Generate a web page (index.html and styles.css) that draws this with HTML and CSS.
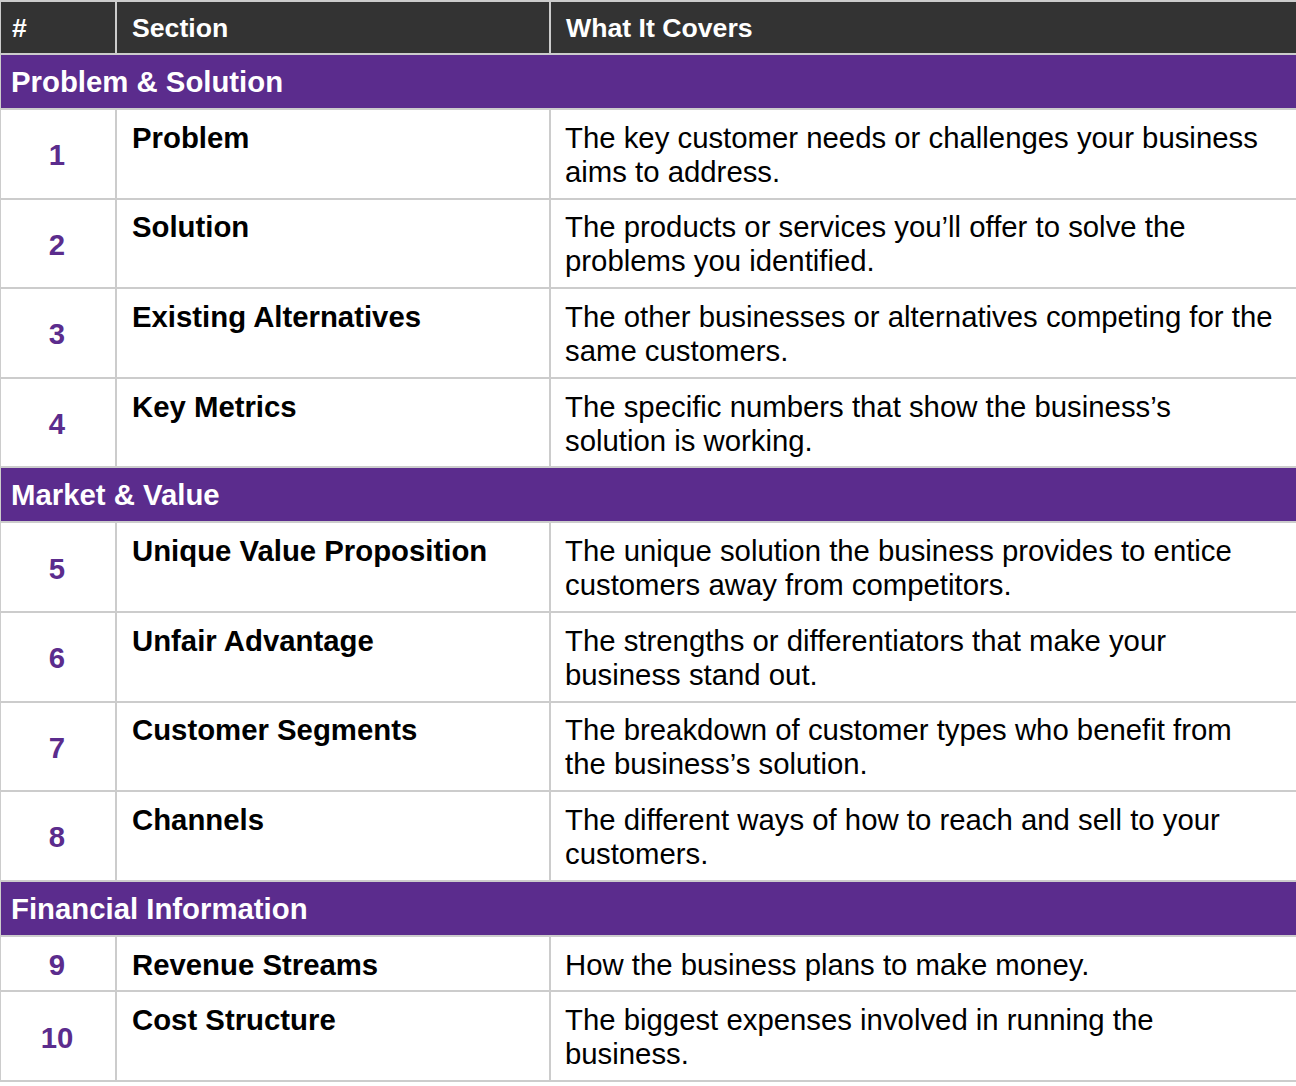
FILE: index.html
```html
<!DOCTYPE html>
<html>
<head>
<meta charset="utf-8">
<link rel="stylesheet" href="styles.css">
</head>
<body>
<table class="canvas">
  <colgroup>
    <col class="c-num">
    <col class="c-sec">
    <col class="c-desc">
  </colgroup>
  <thead>
    <tr class="head">
      <th class="num-h">#</th>
      <th>Section</th>
      <th>What It Covers</th>
    </tr>
  </thead>
  <tbody>
    <tr class="group"><td colspan="3">Problem &amp; Solution</td></tr>
    <tr><td class="num">1</td><td class="sec">Problem</td><td class="desc">The key customer needs or challenges your business aims to address.</td></tr>
    <tr><td class="num">2</td><td class="sec">Solution</td><td class="desc">The products or services you’ll offer to solve the problems you identified.</td></tr>
    <tr><td class="num">3</td><td class="sec">Existing Alternatives</td><td class="desc">The other businesses or alternatives competing for the same customers.</td></tr>
    <tr><td class="num">4</td><td class="sec">Key Metrics</td><td class="desc">The specific numbers that show the business’s solution is working.</td></tr>
    <tr class="group"><td colspan="3">Market &amp; Value</td></tr>
    <tr><td class="num">5</td><td class="sec">Unique Value Proposition</td><td class="desc">The unique solution the business provides to entice customers away from competitors.</td></tr>
    <tr><td class="num">6</td><td class="sec">Unfair Advantage</td><td class="desc">The strengths or differentiators that make your business stand out.</td></tr>
    <tr><td class="num">7</td><td class="sec">Customer Segments</td><td class="desc">The breakdown of customer types who benefit from the business’s solution.</td></tr>
    <tr><td class="num">8</td><td class="sec">Channels</td><td class="desc">The different ways of how to reach and sell to your customers.</td></tr>
    <tr class="group"><td colspan="3">Financial Information</td></tr>
    <tr><td class="num">9</td><td class="sec">Revenue Streams</td><td class="desc">How the business plans to make money.</td></tr>
    <tr><td class="num">10</td><td class="sec">Cost Structure</td><td class="desc">The biggest expenses involved in running the business.</td></tr>
  </tbody>
</table>
</body>
</html>
```
FILE: styles.css
```css
html, body {
  margin: 0;
  padding: 0;
  background: #ffffff;
}
body {
  font-family: "Liberation Sans", Arial, sans-serif;
  color: #000;
}
.canvas {
  border-collapse: collapse;
  width: 1298px;
  margin-left: -1px;
  table-layout: fixed;
}
.c-num { width: 116px; }
.c-sec { width: 434px; }
.c-desc { width: 748px; }
.canvas th, .canvas td {
  border: 2px solid #cccccc;
  font-size: 29.33px;
  line-height: 34px;
  text-align: left;
  vertical-align: top;
}
.head th {
  background: #333333;
  color: #ffffff;
  font-weight: bold;
  padding: 9px 14px 8px 15px;
  font-size: 26.67px;
  line-height: 34px;
}
.head .num-h { padding-left: 11px; }
.group td {
  background: #5b2c8d;
  color: #ffffff;
  font-weight: bold;
  padding: 10px 11px 9px 10px;
  font-size: 29.33px;
  line-height: 34px;
}
.num {
  color: #5b2c8d;
  font-weight: bold;
  text-align: center !important;
  vertical-align: middle !important;
  padding: 3px 2px 0 0;
}
.sec {
  font-weight: bold;
  padding: 10.8px 12px 8.8px 15px;
}
.desc {
  padding: 10.8px 20px 8.8px 14px;
}
```
